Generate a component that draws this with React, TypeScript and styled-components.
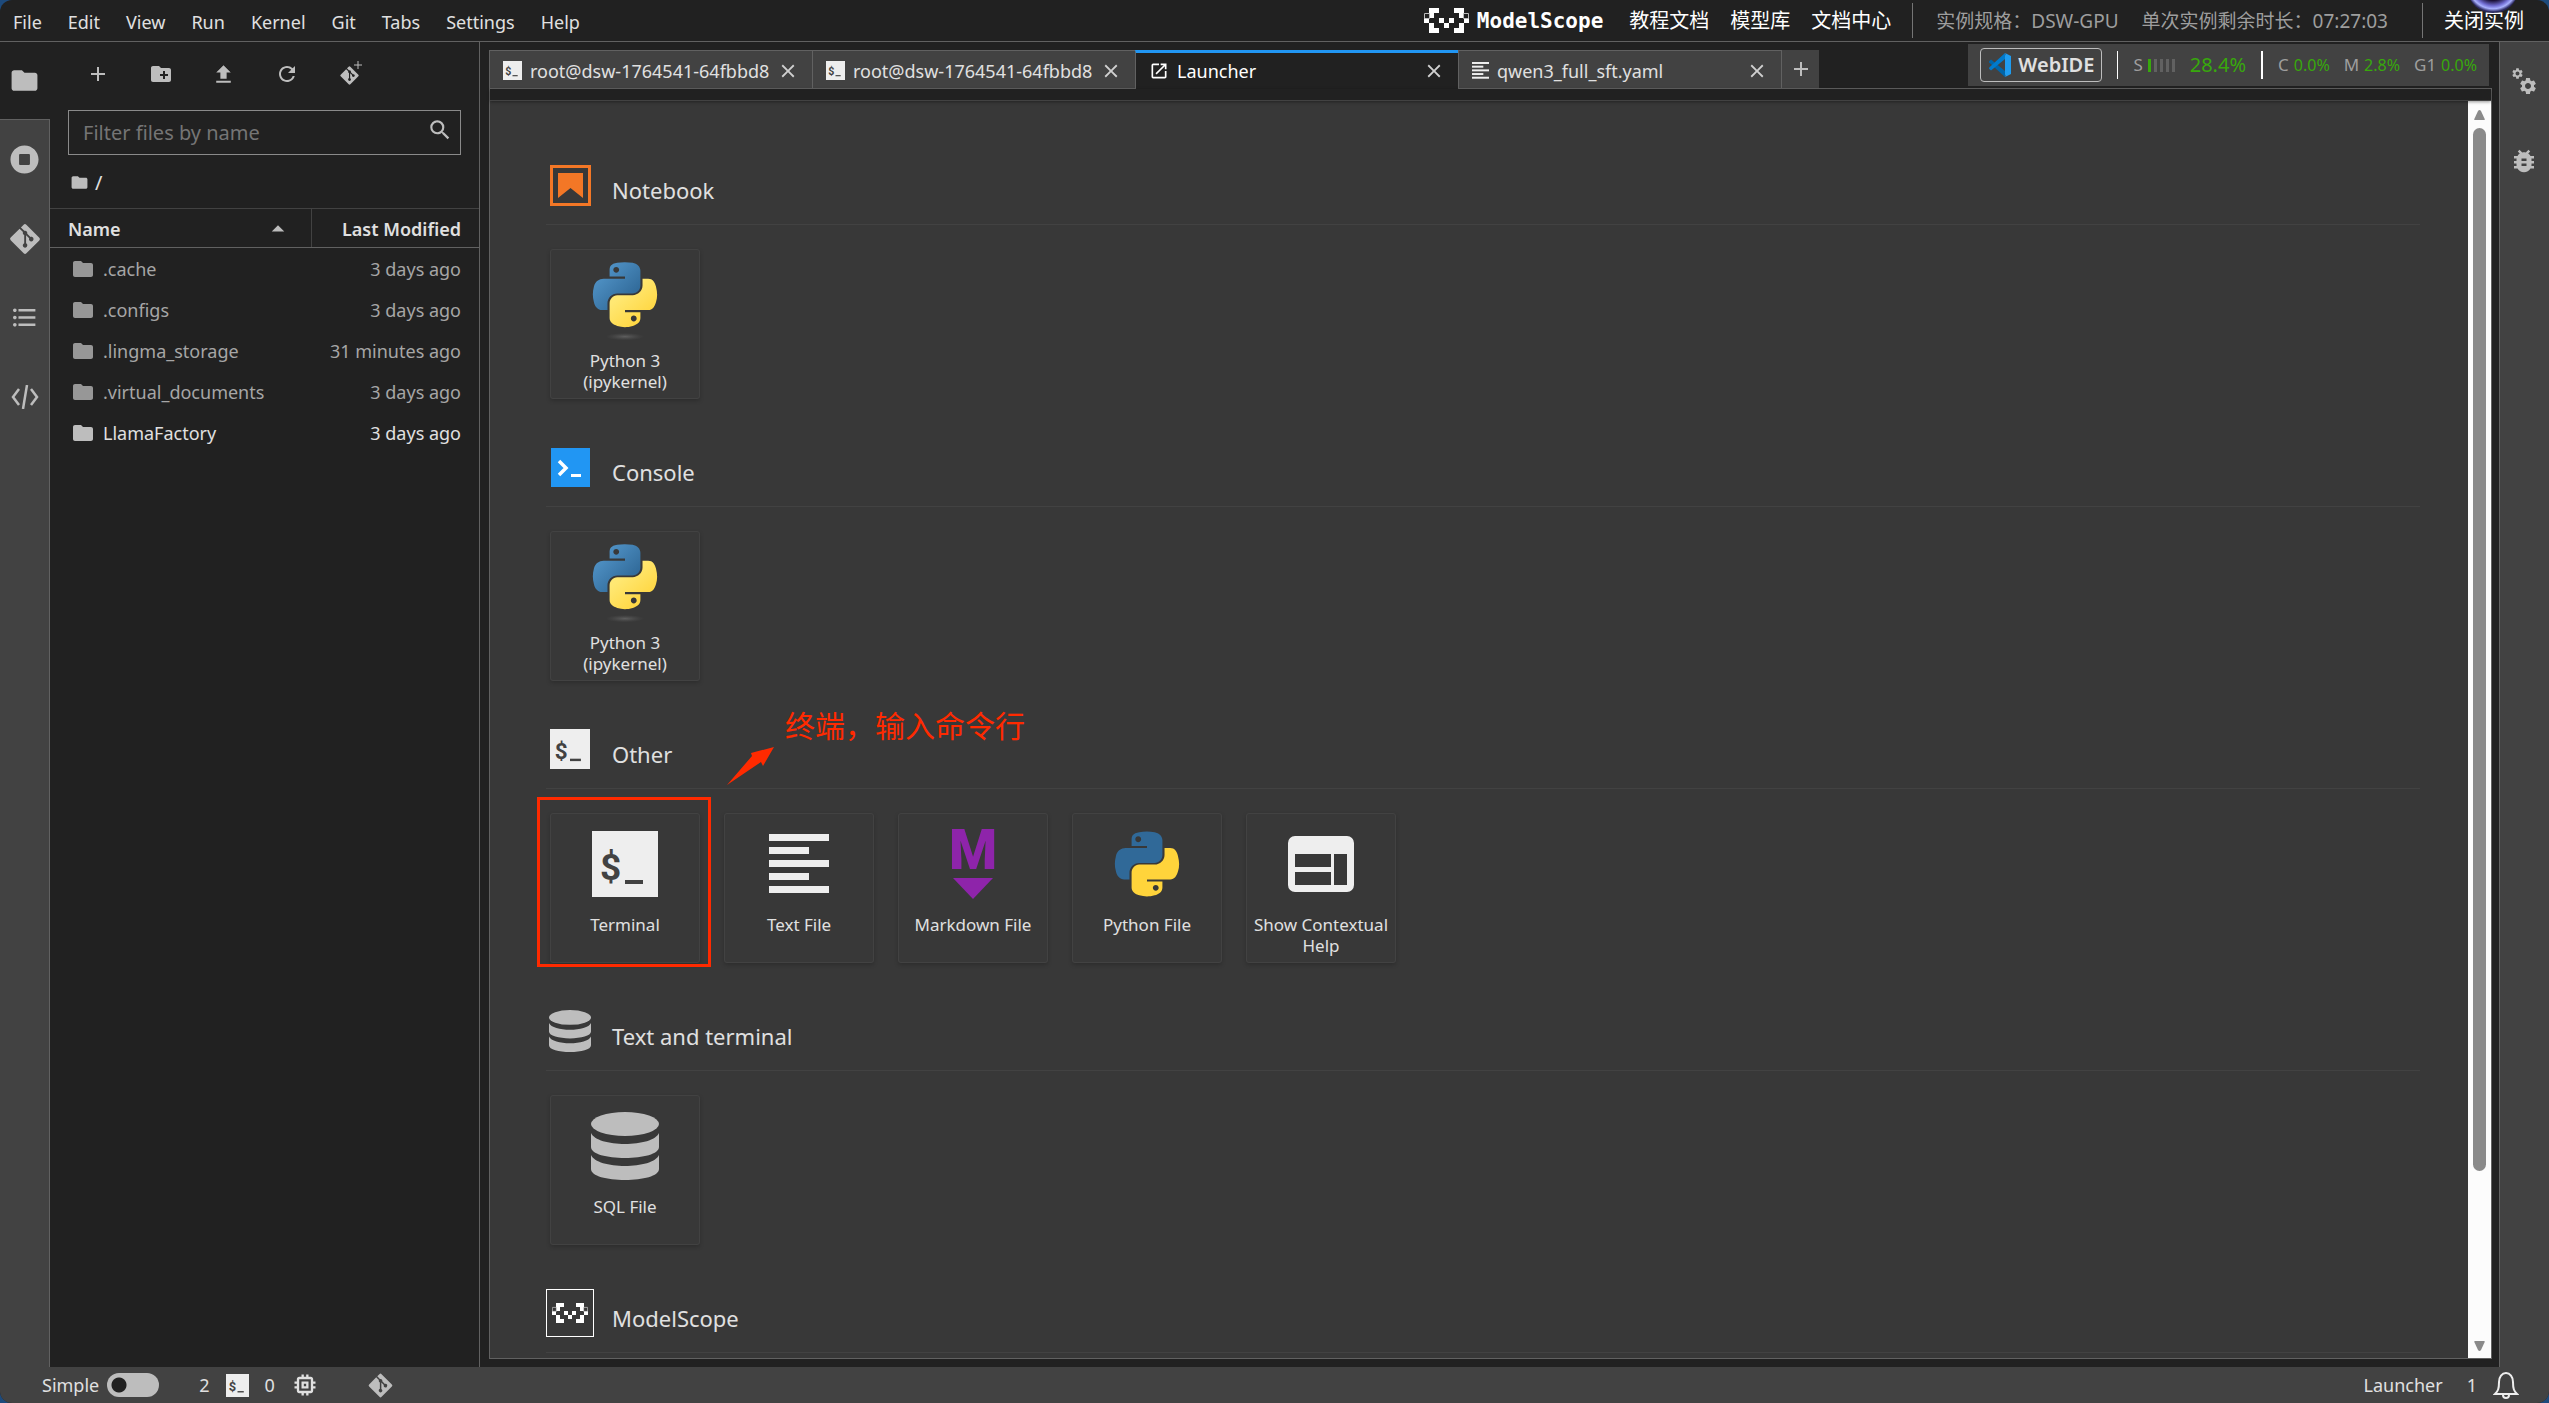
import React, { ReactNode } from "react";
import styled, { createGlobalStyle, css } from "styled-components";
import {
  MdAdd,
  MdArrowDropUp,
  MdBugReport,
  MdClose,
  MdCreateNewFolder,
  MdFileUpload,
  MdFolder,
  MdFormatListBulleted,
  MdMemory,
  MdOpenInNew,
  MdRefresh,
  MdSearch,
  MdSettings,
} from "react-icons/md";
import { FaGitAlt, FaStopCircle } from "react-icons/fa";

const color = {
  base: "#212121",
  bar: "#424242",
  content: "#383838",
  line: "#616161",
  faint: "#424242",
  text: "#e0e0e0",
  muted: "#9e9e9e",
  icon: "#bdbdbd",
  brand: "#2196f3",
  green: "#38a80c",
  note: "#ff2a00",
};

const GlobalStyle = createGlobalStyle`
  *, *::before, *::after { box-sizing: border-box; }
  body {
    margin: 0;
    background: #1d4a7c;
    color: ${color.text};
    font-family: "Noto Sans", "Noto Sans CJK SC", sans-serif;
    font-size: 18px;
    line-height: 24px;
  }
  button, input {
    font: inherit;
    color: inherit;
  }
  button {
    padding: 0;
    border: 0;
    background: none;
    cursor: pointer;
  }
  svg { display: block; flex: none; }
`;

/* ---------- shell ---------- */

const Shell = styled.div`
  display: flex;
  flex-direction: column;
  height: 100vh;
  overflow: hidden;
  border-radius: 12px;
  background: ${color.base};
`;

const Body = styled.div`
  display: flex;
  flex: 1;
  min-height: 0;
`;

/* ---------- top bar ---------- */

const TopBar = styled.header`
  display: flex;
  align-items: center;
  height: 42px;
  flex: none;
  border-bottom: 1px solid ${color.line};
`;

const Menu = styled.nav`
  display: flex;
  align-items: center;
  padding-top: 2px;
`;

const MenuItem = styled.button`
  padding: 0 13px;
`;

const TopRight = styled.div`
  display: flex;
  align-items: center;
  align-self: stretch;
  gap: 21px;
  margin-left: auto;
  padding-right: 25px;
  font-size: 20px;
  white-space: nowrap;
`;

const Brand = styled.a`
  display: flex;
  align-items: center;
  gap: 8px;
  margin-right: 5px;
  color: #fff;
  text-decoration: none;
  font-family: "DejaVu Sans Mono", monospace;
  font-size: 21px;
  font-weight: 700;
`;

const TopLink = styled.a`
  color: #fff;
  text-decoration: none;
`;

const TopInfo = styled.span`
  margin-left: 2px;
  color: ${color.muted};
  font-size: 19px;
`;

const TopRule = styled.span<{ $push?: boolean }>`
  width: 1px;
  height: 35px;
  background: #757575;
  margin-left: ${(p) => (p.$push ? "13px" : "0")};
`;

const CloseInstance = styled.div`
  position: relative;
`;

const Orb = styled.span`
  position: absolute;
  right: 6px;
  top: -42px;
  width: 50px;
  height: 46px;
  border-radius: 50%;
  background: radial-gradient(circle at 50% 38%, #1a1034 0 42%, #6f6bd0 56%, #a9b1ff 64%, #2c2a60 72%);
`;

/* ---------- side bars ---------- */

const SideBar = styled.aside<{ $right?: boolean }>`
  display: flex;
  flex-direction: column;
  width: 50px;
  flex: none;
  background: ${color.bar};
  ${(p) => p.$right && css`border-left: 1px solid ${color.line};`}
`;

const SideTab = styled.button<{ $active?: boolean; $right?: boolean }>`
  display: flex;
  align-items: center;
  justify-content: center;
  height: ${(p) => (p.$active ? "77px" : "79px")};
  color: ${color.icon};
  background: ${(p) => (p.$active ? color.base : "transparent")};
  border-right: 1px solid ${(p) => (p.$active ? color.base : p.$right ? "transparent" : color.line)};
`;

const SideFill = styled.div`
  flex: 1;
  border-right: 1px solid ${color.line};
`;

const TabsUnder = styled.div`
  display: flex;
  flex-direction: column;
  border-top: 1px solid ${color.line};
`;

/* ---------- file browser ---------- */

const FilePanel = styled.section`
  display: flex;
  flex-direction: column;
  width: 430px;
  flex: none;
  border-right: 1px solid ${color.line};
`;

const FileTools = styled.div`
  display: flex;
  height: 64px;
  padding-left: 16px;
`;

const ToolButton = styled.button`
  display: flex;
  align-items: center;
  justify-content: center;
  width: 63px;
  color: ${color.icon};
`;

const FilterBox = styled.label`
  display: flex;
  align-items: center;
  height: 45px;
  margin: 4px 18px 0;
  padding: 0 7px 0 14px;
  border: 1px solid #8a8a8a;
  color: ${color.icon};
  svg { margin-bottom: 6px; }
`;

const FilterInput = styled.input`
  flex: 1;
  min-width: 0;
  padding: 0;
  border: 0;
  outline: 0;
  background: none;
  font-size: 20px;
  &::placeholder { color: #757575; opacity: 1; }
`;

const Crumbs = styled.div`
  display: flex;
  align-items: center;
  gap: 6px;
  height: 53px;
  padding: 2px 0 0 20px;
  color: ${color.text};
  font-size: 20px;
`;

const FileTable = styled.table`
  width: 100%;
  table-layout: fixed;
  border-collapse: collapse;
`;

const HeadCell = styled.th<{ $end?: boolean }>`
  height: 39px;
  padding: 2px 18px 0;
  border-top: 1px solid ${color.faint};
  border-bottom: 1px solid ${color.line};
  font-weight: 600;
  text-align: ${(p) => (p.$end ? "right" : "left")};
  white-space: nowrap;
  ${(p) => p.$end && css`
    width: 168px;
    border-left: 1px solid ${color.faint};
  `}
`;

const HeadSort = styled.span`
  display: flex;
  align-items: center;
  justify-content: space-between;
  height: 24px;
`;

const FileRow = styled.tr<{ $dim?: boolean }>`
  height: 41px;
  color: ${(p) => (p.$dim ? "#a6a6a6" : color.text)};
  svg { color: ${(p) => (p.$dim ? "#979797" : color.icon)}; }
`;

const FileCell = styled.td<{ $end?: boolean }>`
  padding: ${(p) => (p.$end ? "2px 18px 0 0" : "2px 0 0 21px")};
  text-align: ${(p) => (p.$end ? "right" : "left")};
  white-space: nowrap;
`;

const FileName = styled.span`
  display: flex;
  align-items: center;
  gap: 8px;
`;

/* ---------- dock ---------- */

const Dock = styled.main`
  display: flex;
  flex-direction: column;
  flex: 1;
  min-width: 0;
  padding: 0 7px 8px 9px;
`;

const TabRow = styled.div`
  display: flex;
  align-items: flex-end;
  height: 47px;
  flex: none;
  border-bottom: 1px solid ${color.line};
`;

const DockTab = styled.div<{ $active?: boolean }>`
  display: flex;
  align-items: center;
  width: 324px;
  height: 38px;
  padding: 2px 13px 0;
  border: 1px solid ${color.line};
  border-bottom: 0;
  margin-right: -1px;
  background: ${color.bar};
  ${(p) => p.$active && css`
    height: 39px;
    margin-bottom: -1px;
    padding-top: 0;
    border-top: 3px solid ${color.brand};
    background: ${color.base};
    color: #fff;
  `}
`;

const TabTitle = styled.button`
  display: flex;
  align-items: center;
  gap: 8px;
  flex: 1;
  min-width: 0;
  white-space: nowrap;
`;

const CloseButton = styled.button`
  display: flex;
  color: #d0d0d0;
`;

const NewTab = styled.button`
  display: flex;
  align-items: center;
  justify-content: center;
  width: 37px;
  height: 38px;
  margin-left: 1px;
  background: ${color.bar};
  color: ${color.icon};
`;

const Monitor = styled.div`
  display: flex;
  align-items: center;
  height: 42px;
  margin: 0 3px 2px auto;
  padding: 0 12px;
  background: ${color.bar};
  font-size: 17px;
  white-space: nowrap;
`;

const WebIde = styled.button`
  display: flex;
  align-items: center;
  gap: 6px;
  height: 34px;
  padding: 0 7px;
  border: 1px solid ${color.icon};
  border-radius: 4px;
  font-size: 20px;
  font-weight: 600;
`;

const MonitorRule = styled.span<{ $wide?: boolean }>`
  width: ${(p) => (p.$wide ? "2px" : "1px")};
  height: 28px;
  margin: 0 15px;
  background: #fff;
`;

const Meter = styled.span`
  display: flex;
  align-items: center;
  gap: 5px;
  color: ${color.muted};
`;

const MeterBars = styled.span`
  display: flex;
  gap: 3px;
  margin-right: 10px;
`;

const MeterBar = styled.i<{ $on?: boolean }>`
  width: 3px;
  height: 13px;
  background: ${(p) => (p.$on ? color.green : "#616161")};
`;

const Percent = styled.span<{ $large?: boolean }>`
  color: ${color.green};
  font-size: ${(p) => (p.$large ? "20px" : "16px")};
`;

const Meters = styled.span`
  display: flex;
  gap: 14px;
`;

const Frame = styled.div`
  display: flex;
  flex-direction: column;
  flex: 1;
  min-height: 0;
  border: 1px solid ${color.line};
  border-top: 0;
`;

const DocToolbar = styled.div`
  height: 12px;
  flex: none;
  border-bottom: 1px solid ${color.faint};
  box-shadow: 0 1px 3px rgba(0, 0, 0, 0.4);
  z-index: 1;
`;

const Scroller = styled.div`
  display: flex;
  flex: 1;
  min-height: 0;
`;

const Launcher = styled.div`
  flex: 1;
  min-width: 0;
  overflow: hidden;
  padding: 60px 48px 0 56px;
  background: ${color.content};
`;

const ScrollTrack = styled.div`
  display: flex;
  flex-direction: column;
  align-items: center;
  justify-content: space-between;
  width: 23px;
  padding: 9px 0 7px;
  background: #fcfcfc;
  color: #8a8a8a;
`;

const ScrollSpan = styled.div`
  flex: 1;
  width: 13px;
  padding-top: 8px;
`;

const ScrollThumb = styled.div`
  height: 86%;
  border-radius: 7px;
  background: #8a8a8a;
`;

/* ---------- launcher ---------- */

const Section = styled.section`
  position: relative;
  padding-bottom: 44px;
`;

const SectionHead = styled.div`
  display: flex;
  align-items: flex-start;
  gap: 18px;
  height: 64px;
  border-bottom: 1px solid ${color.faint};
`;

const SectionIcon = styled.span`
  display: flex;
  align-items: center;
  justify-content: center;
  width: 48px;
  height: 48px;
`;

const SectionTitle = styled.h2`
  margin: 0;
  padding-top: 13px;
  font-size: 22px;
  line-height: 32px;
  font-weight: 400;
`;

const Cards = styled.div`
  display: flex;
  gap: 24px;
  padding: 24px 4px 0;
`;

const CardWrap = styled.div`
  position: relative;
`;

const Card = styled.button`
  display: flex;
  flex-direction: column;
  align-items: center;
  width: 150px;
  height: 150px;
  border: 1px solid ${color.faint};
  border-radius: 3px;
  box-shadow: 0 2px 4px rgba(0, 0, 0, 0.2);
`;

const CardIcon = styled.span`
  display: flex;
  align-items: center;
  justify-content: center;
  height: 100px;
  flex: none;
`;

const CardLabel = styled.span`
  font-size: 17px;
  line-height: 21px;
`;

const Highlight = styled.span`
  position: absolute;
  inset: -16px -11px -4px -13px;
  border: 3px solid ${color.note};
  pointer-events: none;
`;

const Note = styled.span`
  position: absolute;
  left: 239px;
  top: -19px;
  color: ${color.note};
  font-size: 30px;
  line-height: 40px;
`;

const NoteArrow = styled.svg`
  position: absolute;
  left: 181px;
  top: 22px;
`;

/* ---------- status bar ---------- */

const StatusBar = styled.footer`
  display: flex;
  align-items: center;
  height: 36px;
  flex: none;
  padding: 0 30px 0 42px;
  background: ${color.bar};
`;

const StatusGroup = styled.div<{ $end?: boolean }>`
  display: flex;
  align-items: center;
  gap: ${(p) => (p.$end ? "24px" : "16px")};
  margin-left: ${(p) => (p.$end ? "auto" : "40px")};
`;

const SimpleLabel = styled.label`
  display: flex;
  align-items: center;
  gap: 8px;
`;

const Toggle = styled.input`
  appearance: none;
  width: 52px;
  height: 24px;
  margin: 0;
  border-radius: 12px;
  background: radial-gradient(circle at 12px 12px, ${color.base} 7px, ${color.icon} 8px);
`;

const GitStatus = styled.button`
  display: flex;
  margin-left: 48px;
  color: ${color.icon};
`;

const Notices = styled.button`
  display: flex;
  align-items: center;
  gap: 16px;
`;

/* ---------- drawings ---------- */

const TerminalIcon = ({ size }: { size: number }) => (
  <svg width={size} height={size} viewBox="0 0 66 66">
    <rect width="66" height="66" fill="#eeeeee" />
    <text x="8" y="49" fontFamily="Roboto" fontSize="37" fontWeight="700" fill="#424242">$</text>
    <rect x="33" y="49" width="18" height="4" fill="#424242" />
  </svg>
);

const PythonIcon = ({ size, shaded }: { size: number; shaded?: boolean }) => (
  <svg
    width={size}
    height={shaded ? size * 1.25 : size}
    viewBox={shaded ? "0 -5 128 160" : "0 0 128 128"}
  >
    <defs>
      <linearGradient id="pyBlue" x1="0" y1="0" x2="0.8" y2="0.8">
        <stop offset="0" stopColor="#5a9fd4" />
        <stop offset="1" stopColor="#306998" />
      </linearGradient>
      <linearGradient id="pyYellow" x1="0.8" y1="0.9" x2="0.3" y2="0.3">
        <stop offset="0" stopColor="#ffd43b" />
        <stop offset="1" stopColor="#ffe873" />
      </linearGradient>
      <radialGradient id="pyShade">
        <stop offset="0" stopColor="#b8b8b8" stopOpacity="0.3" />
        <stop offset="1" stopColor="#7f7f7f" stopOpacity="0" />
      </radialGradient>
    </defs>
    <path
      fill={shaded ? "url(#pyBlue)" : "#306998"}
      d="M49.33 62h29.159C86.606 62 93 55.132 93 46.981V19.183c0-7.912-6.632-13.856-14.555-15.176-5.014-.835-10.195-1.215-15.187-1.191-4.99.023-9.612.448-13.805 1.191C37.098 6.188 35 10.758 35 19.183V30h29v4H23.776c-8.484 0-15.914 5.108-18.237 14.811-2.681 11.12-2.8 17.919 0 29.53C7.614 86.983 12.569 93 21.054 93H31V79.952C31 70.315 39.428 62 49.33 62zm-1.838-39.11c-3.026 0-5.478-2.479-5.478-5.545 0-3.079 2.451-5.581 5.478-5.581 3.015 0 5.479 2.502 5.479 5.581-.001 3.066-2.465 5.545-5.479 5.545z"
    />
    <path
      fill={shaded ? "url(#pyYellow)" : "#ffd43b"}
      d="M122.281 48.811C120.183 40.363 116.178 34 107.682 34H97v12.981C97 57.031 88.206 65 78.489 65H49.33C41.342 65 35 72.326 35 80.326v27.8c0 7.91 6.745 12.564 14.462 14.834 9.242 2.717 17.994 3.208 29.051 0C85.862 120.831 93 116.549 93 108.126V97H64v-4h43.682c8.484 0 11.647-5.776 14.599-14.66 3.047-9.145 2.916-17.799 0-29.529zM80.505 103.364c3.027 0 5.479 2.48 5.479 5.546 0 3.079-2.451 5.581-5.479 5.581-3.015 0-5.479-2.502-5.479-5.581.001-3.066 2.465-5.546 5.479-5.546z"
    />
    {shaded && <ellipse cx="64" cy="143" rx="36" ry="7" fill="url(#pyShade)" />}
  </svg>
);

const TextLinesIcon = ({ size }: { size: number }) => (
  <svg width={size} height={size} viewBox="0 0 60 60" fill="#eeeeee">
    <rect width="60" height="7" />
    <rect y="13" width="40" height="7" />
    <rect y="26" width="60" height="7" />
    <rect y="39" width="40" height="7" />
    <rect y="52" width="60" height="7" />
  </svg>
);

const MarkdownIcon = () => (
  <svg width="60" height="98" viewBox="0 0 60 98" fill="#8e24aa">
    <text x="30" y="54" textAnchor="middle" fontFamily="Roboto" fontWeight="900" fontSize="55">M</text>
    <path d="M10 63h40L30 84z" />
  </svg>
);

const HelpPanelIcon = () => (
  <svg width="66" height="56" viewBox="0 0 66 56">
    <path
      fill="#eeeeee"
      fillRule="evenodd"
      d="M7 0h52a7 7 0 0 1 7 7v42a7 7 0 0 1-7 7H7a7 7 0 0 1-7-7V7a7 7 0 0 1 7-7zM7 18v13h36V18zM7 36v13h36V36zM46 18v31h13V18z"
    />
  </svg>
);

const DatabaseIcon = ({ size }: { size: number }) => (
  <svg width={size} height={size} viewBox="0 0 68 68" fill={color.icon}>
    <ellipse cx="34" cy="12" rx="34" ry="12" />
    <path d="M0 21c3 7 18 11 34 11s31-4 34-11v14c0 7-16 11-34 11S0 42 0 35z" />
    <path d="M0 43c3 7 18 11 34 11s31-4 34-11v14c0 7-16 11-34 11S0 64 0 57z" />
  </svg>
);

const NotebookIcon = () => (
  <svg width="41" height="41" viewBox="0 0 41 41" fill="#f37726">
    <path fillRule="evenodd" d="M0 0h41v41H0zM3 3v35h35V3z" />
    <path d="M8 8h25v25L20.500 23 8 33z" />
  </svg>
);

const ConsoleIcon = () => (
  <svg width="39" height="39" viewBox="0 0 39 39">
    <rect width="39" height="39" fill={color.brand} />
    <path d="M8 13l7 7-7 7" fill="none" stroke="#fff" strokeWidth="3.500" />
    <rect x="20" y="26" width="10" height="3" fill="#fff" />
  </svg>
);

const ScopeMark = ({ unit }: { unit: number }) => (
  <svg width={unit * 9} height={unit * 5} viewBox="0 0 45 25" fill="#fff">
    <path d="M5 0h10v5h-5v5H5zM0 10h5v5H0zM5 15h5v5h5v5H5z" />
    <path d="M40 0H30v5h5v5h5zM45 10h-5v5h5zM40 15h-5v5h-5v5h10z" />
    <path d="M15 10h5v5h5v5h-5v-5h-5zM25 10h5v5h-5z" />
    <path d="M.5 5.500h5v5h-5zM39.500 5.500h5v5h-5z" fill="none" stroke="#bbb" />
  </svg>
);

const ScopeBox = styled.span`
  display: flex;
  align-items: center;
  justify-content: center;
  width: 48px;
  height: 48px;
  border: 1px solid #fff;
`;

const VsCodeIcon = () => (
  <svg width="24" height="24" viewBox="0 0 24 24">
    <path fill="#0065a9" d="M1 8.200l2-1.700L17 18v6L1.200 9.500z" />
    <path fill="#007acc" d="M1 15.800l2 1.700L17 6V0L1.200 14.500z" />
    <path fill="#1f9cf0" d="M17 0l6 3v18l-6 3c.8-1 .5-2 0-2.500V2.500c.5-.5.8-1.500 0-2.500z" />
  </svg>
);

const SnippetIcon = () => (
  <svg width="28" height="24" viewBox="0 0 28 24" fill="none" stroke="currentColor" strokeWidth="2.500">
    <path d="M8 4L2 12l6 8M20 4l6 8-6 8M16 0l-4 24" />
  </svg>
);

const GearsIcon = () => (
  <svg width="27" height="30" viewBox="0 0 27 30">
    <MdSettings x={0} y={0} size={13} />
    <MdSettings x={7} y={9} size={20} />
  </svg>
);

const GitPlusIcon = () => (
  <svg width="26" height="28" viewBox="0 0 26 28">
    <FaGitAlt x={2} y={5} size={21} />
    <path d="M21 1v8M17 5h8" stroke="currentColor" strokeWidth="1" />
  </svg>
);

const BellIcon = () => (
  <svg width="26" height="28" viewBox="0 0 26 28" fill="none" stroke="#eeeeee" strokeWidth="2">
    <path d="M2 23h22c-3-3-4-5-4-12 0-5-3-9-7-9s-7 4-7 9c0 7-1 9-4 12z" />
    <path d="M10 24c0 4 6 4 6 0" />
  </svg>
);

const Caret = ({ down }: { down?: boolean }) => (
  <svg width="11" height="10" viewBox="0 0 11 10" fill="currentColor">
    <path d={down ? "M1 0h9q1 0 .7 1L7 9q-1.500 2-3 0L.3 1Q0 0 1 0z" : "M1 10h9q1 0 .7-1L7 1Q5.500-1 4 1L.3 9q-.3 1 .7 1z"} />
  </svg>
);

/* ---------- data ---------- */

const menus = ["File", "Edit", "View", "Run", "Kernel", "Git", "Tabs", "Settings", "Help"];

const files = [
  { name: ".cache", when: "3 days ago", dim: true },
  { name: ".configs", when: "3 days ago", dim: true },
  { name: ".lingma_storage", when: "31 minutes ago", dim: true },
  { name: ".virtual_documents", when: "3 days ago", dim: true },
  { name: "LlamaFactory", when: "3 days ago", dim: false },
];

const tabs: { title: string; icon: ReactNode; active?: boolean }[] = [
  { title: "root@dsw-1764541-64fbbd8", icon: <TerminalIcon size={19} /> },
  { title: "root@dsw-1764541-64fbbd8", icon: <TerminalIcon size={19} /> },
  { title: "Launcher", icon: <MdOpenInNew size={20} />, active: true },
  { title: "qwen3_full_sft.yaml", icon: <TextLinesIcon size={17} /> },
];

interface CardData {
  label: string;
  icon: ReactNode;
  marked?: boolean;
}

const python3: CardData = { label: "Python 3 (ipykernel)", icon: <PythonIcon size={68} shaded /> };

const sections: { title: string; icon: ReactNode; cards: CardData[]; note?: string }[] = [
  { title: "Notebook", icon: <NotebookIcon />, cards: [python3] },
  { title: "Console", icon: <ConsoleIcon />, cards: [python3] },
  {
    title: "Other",
    icon: <TerminalIcon size={40} />,
    note: "终端，输入命令行",
    cards: [
      { label: "Terminal", icon: <TerminalIcon size={66} />, marked: true },
      { label: "Text File", icon: <TextLinesIcon size={60} /> },
      { label: "Markdown File", icon: <MarkdownIcon /> },
      { label: "Python File", icon: <PythonIcon size={68} /> },
      { label: "Show Contextual Help", icon: <HelpPanelIcon /> },
    ],
  },
  {
    title: "Text and terminal",
    icon: <DatabaseIcon size={42} />,
    cards: [{ label: "SQL File", icon: <DatabaseIcon size={68} /> }],
  },
  { title: "ModelScope", icon: <ScopeBox><ScopeMark unit={4} /></ScopeBox>, cards: [] },
];

/* ---------- app ---------- */

export default function App() {
  return (
    <>
      <GlobalStyle />
      <Shell>
        <TopBar>
          <Menu>
            {menus.map((m) => (
              <MenuItem key={m}>{m}</MenuItem>
            ))}
          </Menu>
          <TopRight>
            <Brand href="#">
              <ScopeMark unit={5} />
              ModelScope
            </Brand>
            <TopLink href="#">教程文档</TopLink>
            <TopLink href="#">模型库</TopLink>
            <TopLink href="#">文档中心</TopLink>
            <TopRule />
            <TopInfo>实例规格：DSW-GPU</TopInfo>
            <TopInfo>单次实例剩余时长：07:27:03</TopInfo>
            <TopRule $push />
            <CloseInstance>
              <TopLink href="#">关闭实例</TopLink>
              <Orb />
            </CloseInstance>
          </TopRight>
        </TopBar>

        <Body>
          <SideBar>
            <SideTab $active aria-label="File Browser"><MdFolder size={31} /></SideTab>
            <TabsUnder>
              <SideTab aria-label="Running"><FaStopCircle size={29} /></SideTab>
              <SideTab aria-label="Git"><FaGitAlt size={34} /></SideTab>
              <SideTab aria-label="Table of Contents"><MdFormatListBulleted size={29} /></SideTab>
              <SideTab aria-label="Snippets"><SnippetIcon /></SideTab>
            </TabsUnder>
            <SideFill />
          </SideBar>

          <FilePanel>
            <FileTools>
              <ToolButton aria-label="New Launcher"><MdAdd size={24} /></ToolButton>
              <ToolButton aria-label="New Folder"><MdCreateNewFolder size={24} /></ToolButton>
              <ToolButton aria-label="Upload"><MdFileUpload size={25} /></ToolButton>
              <ToolButton aria-label="Refresh"><MdRefresh size={24} /></ToolButton>
              <ToolButton aria-label="Git Clone"><GitPlusIcon /></ToolButton>
            </FileTools>
            <FilterBox>
              <FilterInput placeholder="Filter files by name" aria-label="Filter files by name" />
              <MdSearch size={26} />
            </FilterBox>
            <Crumbs>
              <MdFolder size={19} color={color.icon} />
              <span>/</span>
            </Crumbs>
            <FileTable>
              <thead>
                <tr>
                  <HeadCell>
                    <HeadSort>
                      Name
                      <MdArrowDropUp size={30} color={color.icon} />
                    </HeadSort>
                  </HeadCell>
                  <HeadCell $end>Last Modified</HeadCell>
                </tr>
              </thead>
              <tbody>
                {files.map((f) => (
                  <FileRow key={f.name} $dim={f.dim}>
                    <FileCell>
                      <FileName>
                        <MdFolder size={24} />
                        {f.name}
                      </FileName>
                    </FileCell>
                    <FileCell $end>{f.when}</FileCell>
                  </FileRow>
                ))}
              </tbody>
            </FileTable>
          </FilePanel>

          <Dock>
            <TabRow>
              {tabs.map((t, i) => (
                <DockTab key={i} $active={t.active}>
                  <TabTitle>
                    {t.icon}
                    <span>{t.title}</span>
                  </TabTitle>
                  <CloseButton aria-label="Close tab"><MdClose size={22} /></CloseButton>
                </DockTab>
              ))}
              <NewTab aria-label="New tab"><MdAdd size={24} /></NewTab>
              <Monitor>
                <WebIde>
                  <VsCodeIcon />
                  WebIDE
                </WebIde>
                <MonitorRule />
                <Meter>
                  S
                  <MeterBars>
                    {[0, 1, 2, 3, 4].map((n) => (
                      <MeterBar key={n} $on={n === 0} />
                    ))}
                  </MeterBars>
                  <Percent $large>28.4%</Percent>
                </Meter>
                <MonitorRule $wide />
                <Meters>
                  <Meter>C <Percent>0.0%</Percent></Meter>
                  <Meter>M <Percent>2.8%</Percent></Meter>
                  <Meter>G1 <Percent>0.0%</Percent></Meter>
                </Meters>
              </Monitor>
            </TabRow>
            <Frame>
              <DocToolbar />
              <Scroller>
                <Launcher>
                  {sections.map((s) => (
                    <Section key={s.title}>
                      <SectionHead>
                        <SectionIcon>{s.icon}</SectionIcon>
                        <SectionTitle>{s.title}</SectionTitle>
                      </SectionHead>
                      <Cards>
                        {s.cards.map((c) => (
                          <CardWrap key={c.label}>
                            <Card>
                              <CardIcon>{c.icon}</CardIcon>
                              <CardLabel>{c.label}</CardLabel>
                            </Card>
                            {c.marked && <Highlight />}
                          </CardWrap>
                        ))}
                      </Cards>
                      {s.note && (
                        <>
                          <Note>{s.note}</Note>
                          <NoteArrow width="48" height="38" viewBox="0 0 48 38">
                            <path d="M0 38L25 9 24 6 47 0 36 19 34 15z" fill={color.note} />
                          </NoteArrow>
                        </>
                      )}
                    </Section>
                  ))}
                </Launcher>
                <ScrollTrack>
                  <Caret />
                  <ScrollSpan><ScrollThumb /></ScrollSpan>
                  <Caret down />
                </ScrollTrack>
              </Scroller>
            </Frame>
          </Dock>

          <SideBar $right>
            <SideTab $right aria-label="Property Inspector"><GearsIcon /></SideTab>
            <SideTab $right aria-label="Debugger"><MdBugReport size={30} /></SideTab>
          </SideBar>
        </Body>

        <StatusBar>
          <SimpleLabel>
            Simple
            <Toggle type="checkbox" />
          </SimpleLabel>
          <StatusGroup>
            <span>2</span>
            <TerminalIcon size={23} />
            <span>0</span>
            <MdMemory size={28} />
          </StatusGroup>
          <GitStatus aria-label="Git"><FaGitAlt size={27} /></GitStatus>
          <StatusGroup $end>
            <span>Launcher</span>
            <Notices>
              <span>1</span>
              <BellIcon />
            </Notices>
          </StatusGroup>
        </StatusBar>
      </Shell>
    </>
  );
}
